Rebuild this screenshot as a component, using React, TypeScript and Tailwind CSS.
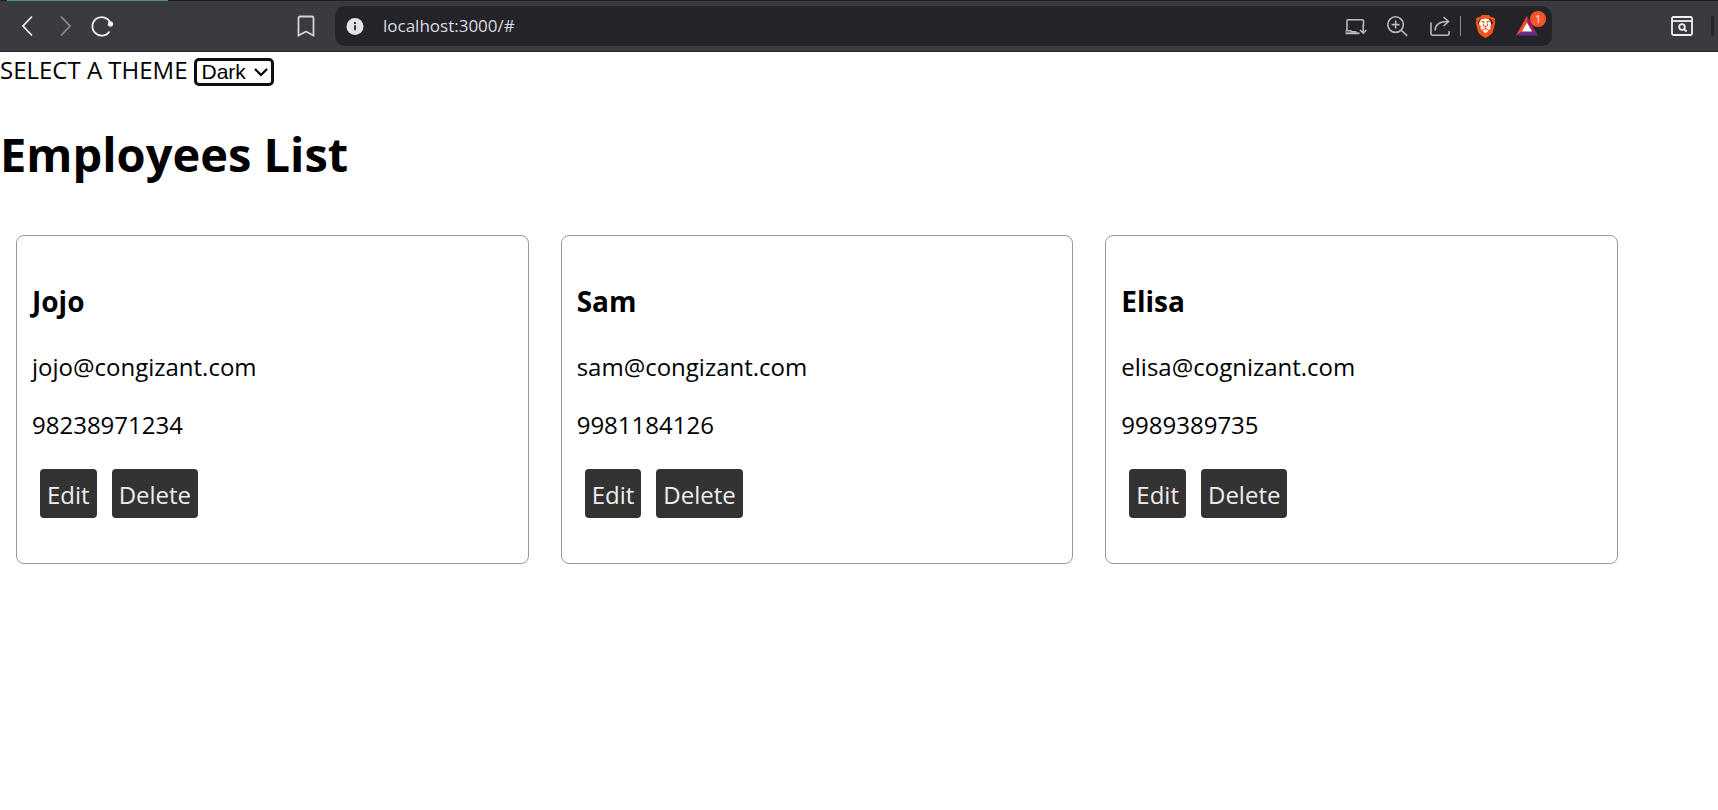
import { useState } from "react";
import type { ReactNode } from "react";
import { SiBrave } from "react-icons/si";

type Employee = { name: string; email: string; phone: string };

const employees: Employee[] = [
  { name: "Jojo", email: "jojo@congizant.com", phone: "98238971234" },
  { name: "Sam", email: "sam@congizant.com", phone: "9981184126" },
  { name: "Elisa", email: "elisa@cognizant.com", phone: "9989389735" },
];

function IconButton({ label, className = "", children }: { label: string; className?: string; children: ReactNode }) {
  return (
    <button type="button" aria-label={label} className={`flex size-6 shrink-0 items-center justify-center ${className}`}>
      {children}
    </button>
  );
}

const line = {
  width: 24,
  height: 24,
  viewBox: "0 0 24 24",
  fill: "none",
  stroke: "currentColor",
  strokeWidth: 1.6,
} as const;

function BrowserBar() {
  return (
    <header className="bg-[#3b3a3f]">
      <div className="h-px bg-[#1f1e25]">
        <div className="ml-[7px] h-px w-[161px] bg-[#4f8f9b]" />
      </div>
      <div className="flex h-[51px] items-center border-b border-[#2a292d] pl-4 text-[#f0eff4]">
        <IconButton label="Back">
          <svg {...line} strokeWidth={1.8}><path d="M16 2.5 7 12l9 9.5" /></svg>
        </IconButton>
        <IconButton label="Forward" className="ml-3 text-[#8b8a90]">
          <svg {...line} strokeWidth={1.8}><path d="M9 2.5 18 12l-9 9.5" /></svg>
        </IconButton>
        <IconButton label="Reload" className="ml-[14px]">
          <svg {...line}>
            <path d="M19.5 17.5A9.3 9.3 0 1 1 20.4 9" strokeWidth={1.8} />
            <circle cx="20.5" cy="10" r="2.7" fill="currentColor" stroke="none" />
          </svg>
        </IconButton>
        <IconButton label="Bookmark this page" className="ml-[180px] text-[#d4d3d8]">
          <svg {...line} strokeWidth={1.8}><path d="M6 2.5h12A1.5 1.5 0 0 1 19.5 4v17.5l-7.5-4-7.5 4V4A1.5 1.5 0 0 1 6 2.5Z" /></svg>
        </IconButton>
        <div className="ml-[17px] flex h-10 min-w-0 flex-1 items-center rounded-[10px] bg-[#242328] pr-[13px] pl-2 text-[#b9b8be]">
          <IconButton label="Site information">
            <svg width="24" height="24" viewBox="0 0 24 24">
              <circle cx="12" cy="12.5" r="8.5" fill="#e4e3e9" />
              <path d="M12 11.3v5M12 8v2" stroke="#242328" strokeWidth="1.8" />
            </svg>
          </IconButton>
          <input
            aria-label="Address"
            defaultValue="localhost:3000/#"
            className="ml-4 h-8 min-w-0 flex-1 bg-transparent pb-[2px] text-[17px] text-[#dcdbe2] outline-none"
          />
          <div className="flex items-center">
            <IconButton label="Install app">
              <svg {...line}>
                <path d="M3 16.7V6.8c0-.6.4-1 1-1h14.5c.6 0 1 .4 1 1V12M1.500 16.700h5.200l1.200 1.200h4.600" />
                <path d="M1.500 19.300h14" strokeWidth={2} />
                <path d="M19.200 11v8.300M16 16l3.200 3.200 3.200-3.200" />
              </svg>
            </IconButton>
            <IconButton label="Zoom" className="ml-[17px]">
              <svg {...line}>
                <circle cx="10.6" cy="10.6" r="7.8" />
                <path d="m16.200 16.200 6 5.600M10.600 6.600v8M6.600 10.600h8" />
              </svg>
            </IconButton>
            <IconButton label="Share" className="ml-[19px]">
              <svg {...line}>
                <path d="M3 8.5v11c0 1 .7 1.7 1.7 1.7h14.6c1 0 1.7-.7 1.7-1.7v-2.5" />
                <path d="M7 16.5c.3-6 4.200-9 13-9M15.500 3l5 4.500-5 4.500" />
              </svg>
            </IconButton>
            <span className="ml-2 h-5 w-px bg-[#8a898f]" />
            <IconButton label="Brave Shields" className="relative ml-3">
              <span className="absolute h-4 w-3 rounded-full bg-white" />
              <SiBrave size={23} className="relative text-[#fb5215]" />
            </IconButton>
            <IconButton label="Brave Rewards" className="relative ml-[18px]">
              <svg width="24" height="24" viewBox="0 0 24 24">
                <path d="M12 2 1 21.500l6.500-4L12 9Z" fill="#ff4b25" />
                <path d="M12 2v7l4.500 8.500 6.500 4Z" fill="#9e1f63" />
                <path d="M1 21.500h22l-6.500-4.200h-9Z" fill="#662d91" />
                <path d="m12 8.500 5 9H7Z" fill="#fff" />
              </svg>
              <span className="absolute -top-[3px] left-[15px] flex size-4 items-center justify-center rounded-full bg-[#fb542b] text-[10px] text-white">
                1
              </span>
            </IconButton>
          </div>
        </div>
        <IconButton label="Search tabs" className="ml-[118px]">
          <svg {...line}>
            <rect x="2" y="3" width="20" height="18" rx="1.5" strokeWidth={1.8} />
            <path d="M2 7h20" strokeWidth={1.8} />
            <circle cx="12" cy="13" r="2.8" strokeWidth={1.8} />
            <path d="m14 15 2.500 2.500" strokeWidth={2} />
          </svg>
        </IconButton>
        <span className="mr-1 ml-[17px] h-5 w-[3px] bg-[#27262a]" />
      </div>
    </header>
  );
}

function ThemePicker() {
  const [theme, setTheme] = useState("Dark");
  return (
    <div className="flex items-center gap-[6px] pt-1">
      <label htmlFor="theme" className="pb-1 leading-7">SELECT A THEME</label>
      <div className="relative flex">
        <select
          id="theme"
          value={theme}
          onChange={(e) => setTheme(e.target.value)}
          className="h-7 w-20 appearance-none rounded-[5px] border-[3px] border-[#101010] bg-white pl-[5px] font-['Liberation_Sans',Arial,sans-serif] text-[21px] leading-[22px]"
        >
          <option>Dark</option>
          <option>Light</option>
        </select>
        <svg width="14" height="9" viewBox="0 0 14 9" fill="none" className="pointer-events-none absolute top-[10px] right-[6px]">
          <path d="m1 1 6 6 6-6" stroke="#000" strokeWidth="2.2" />
        </svg>
      </div>
    </div>
  );
}

function EmployeeCard({ employee }: { employee: Employee }) {
  const button = "rounded-[4px] bg-[#333] px-[7px] pt-[9px] pb-[7px] leading-[33px] text-[#eee]";
  return (
    <article className="rounded-lg border border-[#999] px-[15px] pt-[46px] pb-[45px]">
      <h3 className="text-[28px] leading-[38px] font-bold">{employee.name}</h3>
      <p className="mt-[30px] leading-[33px]">{employee.email}</p>
      <p className="mt-[25px] leading-[33px]">{employee.phone}</p>
      <div className="mt-7 flex gap-[15px] px-2">
        <button type="button" className={button}>Edit</button>
        <button type="button" className={button}>Delete</button>
      </div>
    </article>
  );
}

export default function App() {
  return (
    <div className="min-h-screen bg-white font-['Segoe_UI','Open_Sans','Noto_Sans',sans-serif] text-[24px] text-black">
      <BrowserBar />
      <main>
        <ThemePicker />
        <h1 className="mt-[33px] text-[47px] leading-[66px] font-bold">Employees List</h1>
        <section className="mt-12 grid grid-cols-3 gap-8 pr-[100px] pl-4">
          {employees.map((employee) => (
            <EmployeeCard key={employee.email} employee={employee} />
          ))}
        </section>
      </main>
    </div>
  );
}
